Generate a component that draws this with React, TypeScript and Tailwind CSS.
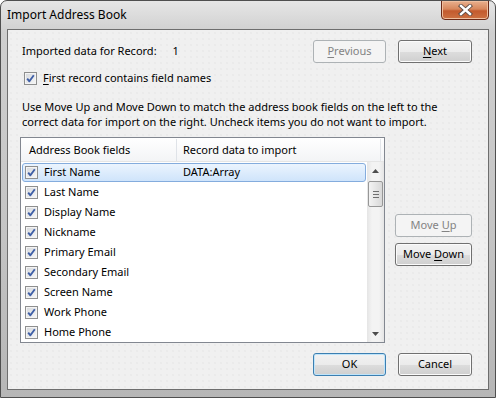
import React from "react";

const rows = [
  { name: "First Name", data: "DATA:Array" },
  { name: "Last Name", data: "" },
  { name: "Display Name", data: "" },
  { name: "Nickname", data: "" },
  { name: "Primary Email", data: "" },
  { name: "Secondary Email", data: "" },
  { name: "Screen Name", data: "" },
  { name: "Work Phone", data: "" },
  { name: "Home Phone", data: "" },
];

function Check() {
  return (
    <span className="flex h-[13px] w-[13px] shrink-0 items-center justify-center border border-[#8e8f8f] bg-[linear-gradient(135deg,#d5d8dc,#f7f7f7)] shadow-[inset_0_0_0_1px_#f4f4f4]">
      <svg width="11" height="11" viewBox="0 0 11 11">
        <path d="M2.2 5.6 L4.4 8.3 L8.8 2.2" fill="none" stroke="#3f5fa6" strokeWidth="1.9" strokeLinejoin="round" />
      </svg>
    </span>
  );
}

function Btn({
  children,
  w,
  disabled,
  isDefault,
}: {
  children: React.ReactNode;
  w: string;
  disabled?: boolean;
  isDefault?: boolean;
}) {
  if (disabled) {
    return (
      <div className={`${w} flex h-[23px] items-center justify-center rounded-[3px] border border-[#adb2b5] bg-[#f4f4f4] text-[#838383]`}>
        <span>{children}</span>
      </div>
    );
  }
  return (
    <div
      className={`${w} flex h-[23px] items-center justify-center rounded-[3px] border ${
        isDefault
          ? "border-[#3c7fb1] shadow-[inset_0_0_0_1px_#bfe4fa]"
          : "border-[#707070] shadow-[inset_0_0_0_1px_#fbfbfb]"
      } bg-[linear-gradient(#f2f2f2_0%,#ebebeb_50%,#dddddd_50%,#cfcfcf_100%)] text-black`}
    >
      <span>{children}</span>
    </div>
  );
}

export default function App() {
  return (
    <div className="flex h-[398px] w-[496px] flex-col overflow-hidden rounded-t-[7px] border border-[#4f4f4f] bg-[linear-gradient(#e6e6e6_0%,#cfcfcf_8%,#c4c4c4_60%,#b6b6b6_100%)] font-['Noto_Sans',sans-serif] text-[11px] text-black">
      {/* title bar */}
      <div className="flex h-[28px] shrink-0 items-start pl-[6px] pr-[6px]">
        <span className="mt-[6px] text-[12px] leading-[16px]">Import Address Book</span>
        <div className="-mt-px ml-auto flex h-[20px] w-[48px] items-center justify-center rounded-b-[4px] border border-[#6b2a17] bg-[linear-gradient(#e9b08e_0%,#d7875c_45%,#c35a2e_55%,#cd7142_100%)] shadow-[inset_0_0_0_1px_#efbf9f]">
          <svg width="15" height="12" viewBox="0 0 15 12">
            <path d="M3 2 L12 10 M12 2 L3 10" stroke="#5b4a44" strokeWidth="4.2" strokeLinecap="square" />
            <path d="M3 2 L12 10 M12 2 L3 10" stroke="#ffffff" strokeWidth="2.4" strokeLinecap="square" />
          </svg>
        </div>
      </div>

      {/* client area */}
      <div className="mx-[6px] flex h-[361px] shrink-0 flex-col border border-[#6e6e6e] bg-[#f0f0f0] bg-[radial-gradient(circle,#e3e3e3_0.6px,transparent_0.8px)] bg-[length:6px_6px] pb-[12px] pl-[12px] pr-[16px] pt-[10px]">
        <div className="flex items-center">
          <span className="ml-[2px]">Imported data for Record:</span>
          <span className="ml-[16px]">1</span>
          <div className="ml-auto flex gap-[12px]">
            <Btn w="w-[73px]" disabled>
              <span className="underline underline-offset-2">P</span>revious
            </Btn>
            <Btn w="w-[74px]">
              <span className="underline underline-offset-2">N</span>ext
            </Btn>
          </div>
        </div>

        <div className="ml-[4px] mt-[9px] flex h-[13px] items-center gap-[6px]">
          <Check />
          <span>
            <span className="underline underline-offset-2">F</span>irst record contains field names
          </span>
        </div>

        <p className="ml-[2px] mt-[14px] leading-[15px]">
          Use Move Up and Move Down to match the address book fields on the left to the
          <br />
          correct data for import on the right. Uncheck items you do not want to import.
        </p>

        <div className="mt-[8px] flex items-center">
          {/* list box */}
          <div className="flex h-[206px] w-[365px] flex-col border border-[#828790] bg-white">
            <div className="flex h-[24px] shrink-0 items-center border-b border-[#e5e5e5] bg-[linear-gradient(#ffffff,#f3f4f6)]">
              <span className="w-[156px] border-r border-[#dfe3e8] pl-[8px] leading-[22px]">Address Book fields</span>
              <span className="w-[204px] border-r border-[#e3e6ea] pl-[6px] leading-[22px]">Record data to import</span>
            </div>
            <div className="flex flex-1">
              <div className="flex flex-1 flex-col">
                {rows.map((r, i) => (
                  <div key={r.name} className="flex h-[20px] items-center pl-px pr-px">
                    <div
                      className={`flex h-[19px] flex-1 items-center rounded-[3px] pl-[2px] ${
                        i === 0
                          ? "border border-[#84acdd] bg-[linear-gradient(#ebf4fe,#cfe4fb)]"
                          : "border border-transparent"
                      }`}
                    >
                      <Check />
                      <span className="w-[145px] shrink-0 pl-[6px]">{r.name}</span>
                      <span>{r.data}</span>
                    </div>
                  </div>
                ))}
              </div>
              {/* scrollbar */}
              <div className="flex w-[17px] flex-col bg-[linear-gradient(90deg,#e5e5e5,#f3f3f3_30%,#f3f3f3_70%,#e5e5e5)]">
                <div className="flex h-[17px] items-center justify-center">
                  <svg width="7" height="4" viewBox="0 0 7 4">
                    <path d="M0 4 L3.5 0 L7 4 Z" fill="#4d4d4d" />
                  </svg>
                </div>
                <div className="mx-px mt-[2px] flex h-[26px] flex-col items-center justify-center gap-[2px] rounded-[2px] border border-[#979797] bg-[linear-gradient(90deg,#f3f3f3,#e6e6e6_50%,#d8d8d8)]">
                  <span className="h-px w-[6px] bg-[#6f6f6f]" />
                  <span className="h-px w-[6px] bg-[#6f6f6f]" />
                  <span className="h-px w-[6px] bg-[#6f6f6f]" />
                </div>
                <div className="mt-auto flex h-[17px] items-center justify-center">
                  <svg width="7" height="4" viewBox="0 0 7 4">
                    <path d="M0 0 L7 0 L3.5 4 Z" fill="#4d4d4d" />
                  </svg>
                </div>
              </div>
            </div>
          </div>

          <div className="ml-[10px] flex flex-col gap-[6px]">
            <Btn w="w-[77px]" disabled>
              Move <span className="underline underline-offset-2">U</span>p
            </Btn>
            <Btn w="w-[77px]">
              Move <span className="underline underline-offset-2">D</span>own
            </Btn>
          </div>
        </div>

        <div className="mt-[10px] flex justify-end gap-[12px]">
          <Btn w="w-[73px]" isDefault>
            OK
          </Btn>
          <Btn w="w-[74px]">Cancel</Btn>
        </div>
      </div>
    </div>
  );
}
